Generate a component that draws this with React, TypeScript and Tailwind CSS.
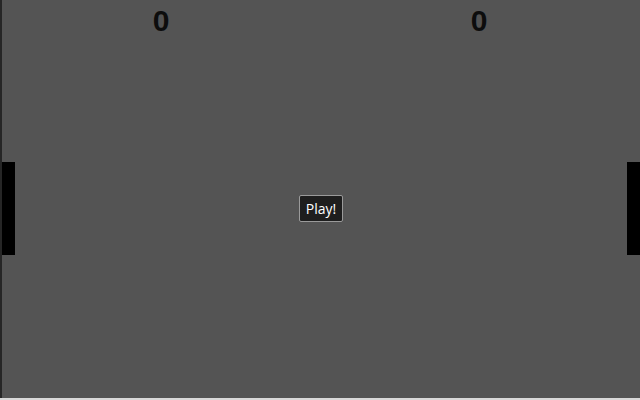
export default function App() {
  return (
    <div className="flex h-[400px] w-[640px] flex-col bg-[#d9d9d9]">
      <div className="relative h-[398px] w-[640px] border-l-2 border-[#262626] bg-[#545454]">
        <div className="flex h-[40px] w-full pt-[5px] pr-[2px]">
          <div className="flex flex-1 justify-center text-[30px] font-bold leading-[32px] text-[#0d0d0d]" style={{ fontFamily: '"Liberation Sans", Arial, sans-serif' }}>
            0
          </div>
          <div className="flex flex-1 justify-center text-[30px] font-bold leading-[32px] text-[#0d0d0d]" style={{ fontFamily: '"Liberation Sans", Arial, sans-serif' }}>
            0
          </div>
        </div>
        <div className="absolute left-0 top-[162px] h-[93px] w-[13px] bg-black" />
        <div className="absolute right-0 top-[162px] h-[93px] w-[13px] bg-black" />
        <button className="absolute left-[297px] top-[195px] flex h-[27px] w-[44px] items-center justify-center rounded-[2px] border border-[#9a9a9a] bg-[#1e1e1e] text-[14px] text-white" style={{ fontFamily: '"Open Sans", sans-serif' }}>
          Play!
        </button>
      </div>
    </div>
  );
}
